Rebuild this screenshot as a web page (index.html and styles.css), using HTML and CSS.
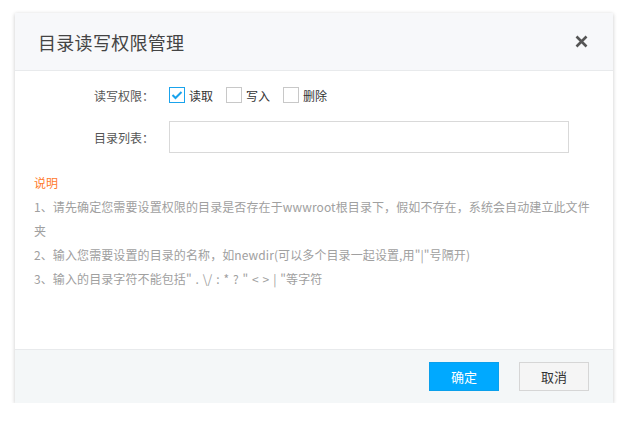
FILE: index.html
```html
<!DOCTYPE html>
<html lang="zh-CN">
<head>
<meta charset="utf-8">
<title>目录读写权限管理</title>
<link rel="stylesheet" href="styles.css">
</head>
<body>
<div class="dialog">
  <div class="dlg-head">
    <div class="dlg-title">目录读写权限管理</div>
    <svg class="dlg-close" width="13" height="13" viewBox="0 0 13 13"><path d="M1.5 1.5L11.5 11.5M11.5 1.5L1.5 11.5" stroke="#555" stroke-width="2.6" stroke-linecap="butt"/></svg>
  </div>
  <div class="dlg-body">
    <div class="form-row">
      <span class="label">读写权限：</span>
      <label class="chk"><span class="box checked"><svg width="12" height="10" viewBox="0 0 12 10"><path d="M1.5 5L4.5 8L10.5 2" fill="none" stroke="#1aa3ec" stroke-width="2"/></svg></span>读取</label>
      <label class="chk"><span class="box"></span>写入</label>
      <label class="chk"><span class="box"></span>删除</label>
    </div>
    <div class="form-row row2">
      <span class="label">目录列表：</span>
      <span class="input"></span>
    </div>
    <div class="notes">
      <div class="note-title">说明</div>
      <p>1、请先确定您需要设置权限的目录是否存在于wwwroot根目录下，假如不存在，系统会自动建立此文件夹</p>
      <p>2、输入您需要设置的目录的名称，如newdir(可以多个目录一起设置,用"|"号隔开)</p>
      <p>3、输入的目录字符不能包括<span class="chars">" . \/ : * ? " &lt; &gt; | "</span>等字符</p>
    </div>
  </div>
  <div class="dlg-foot">
    <span class="btn btn-ok">确定</span>
    <span class="btn btn-cancel">取消</span>
  </div>
</div>
</body>
</html>
```
FILE: styles.css
```css
html, body { margin: 0; padding: 0; background: #fff; }
body {
  font-family: "Noto Sans CJK SC", "Open Sans", sans-serif;
  padding: 13px 0 0 15px;
}
.dialog {
  width: 598px;
  height: 390px;
  background: #fff;
  box-shadow: 0 1px 4px rgba(0,0,0,0.22);
  display: flex;
  flex-direction: column;
}
.dlg-head {
  height: 57px;
  background: #f7f8fa;
  border-bottom: 1px solid #e8eaec;
  display: flex;
  align-items: center;
  justify-content: space-between;
  padding: 0 25px 0 23px;
}
.dlg-title {
  font-size: 18px;
  color: #444;
  letter-spacing: 0.3px;
  line-height: 1;
}
.dlg-close { display: block; }
.dlg-body {
  flex: 1;
  padding: 15px 0 0 19px;
}
.form-row {
  display: flex;
  align-items: center;
  height: 18px;
  padding-left: 60px;
  font-size: 12px;
  color: #333;
}
.label {
  width: 75px;
  color: #555;
}
.chk {
  display: flex;
  align-items: center;
  margin-right: 13px;
}
.box {
  width: 14px;
  height: 14px;
  border: 1px solid #c8c8c8;
  margin-right: 4px;
  display: flex;
  align-items: center;
  justify-content: center;
}
.box.checked { border-color: #1aa3ec; }
.row2 {
  margin-top: 17px;
  height: 32px;
}
.input {
  width: 398px;
  height: 30px;
  border: 1px solid #d9d9d9;
}
.notes {
  margin-top: 18px;
  font-size: 12px;
  color: #a0a0a0;
  line-height: 24px;
  padding-right: 20px;
}
.note-title { color: #ff7a2b; }
.notes p { margin: 0; letter-spacing: 0.1px; }
.chars { word-spacing: 1px; }
.dlg-foot {
  height: 53px;
  background: #f4f7f8;
  border-top: 1px solid #e8eaec;
  display: flex;
  align-items: center;
  justify-content: flex-end;
  padding-right: 24px;
  gap: 20px;
}
.btn {
  width: 70px;
  height: 29px;
  box-sizing: border-box;
  display: flex;
  align-items: center;
  justify-content: center;
  font-size: 13px;
}
.btn-ok { background: #00a9ff; color: #fff; border: 1px solid #0aa0ec; }
.btn-cancel { background: #f5f5f5; color: #333; border: 1px solid #d6d6d6; }
```
